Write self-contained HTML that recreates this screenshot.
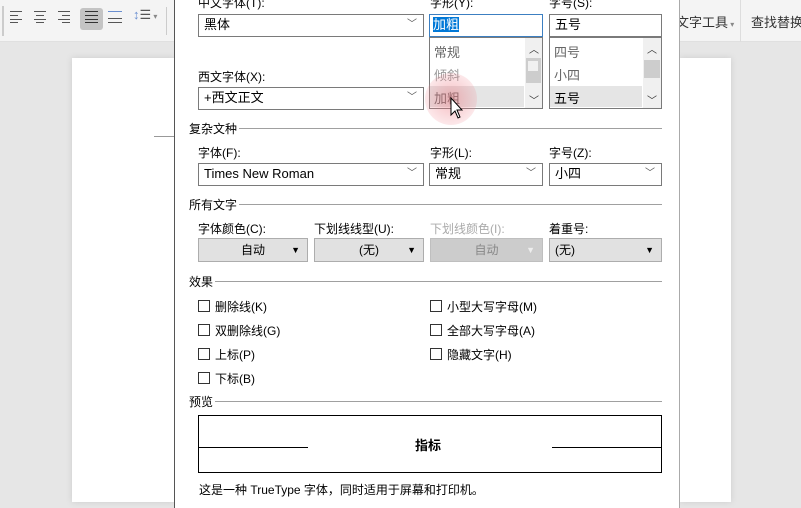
<!DOCTYPE html>
<html><head><meta charset="utf-8"><style>
*{box-sizing:border-box;margin:0;padding:0}
body{width:801px;height:502px;overflow:hidden;position:relative;background:#e6e6e6;font-family:"Liberation Sans","Noto Sans CJK SC",sans-serif;font-size:12px;color:#000}
.a{position:absolute;white-space:nowrap}
.tb{left:0;top:0;width:801px;height:42px;background:#f4f4f4;border-bottom:1px solid #e0e0e0}
.dlg{left:174px;top:-2px;width:506px;height:510px;background:#fff;border-left:1px solid #555;border-right:1px solid #aaa}
.combo{position:absolute;height:23px;border:1px solid #7a7a7a;background:#fff;padding:0 5px;line-height:20px;font-size:13px;white-space:nowrap}
.combo .ch{position:absolute;right:6px;top:0;color:#555;font-size:10px}
.sec{position:absolute;left:189px;font-size:12px;background:#fff;padding-right:2px}
.line{position:absolute;height:1px;background:#a0a0a0}
.lbl{position:absolute;font-size:12px;white-space:nowrap}
.btn{position:absolute;height:24px;background:#e1e1e1;border:1px solid #adadad;font-size:12px;text-align:center;line-height:22px}
.btn .t{position:absolute;right:7px;top:0;font-size:9px}
.cb{position:absolute;width:12px;height:12px;border:1px solid #333;background:#fff}
.ct{position:absolute;font-size:12px;white-space:nowrap}
.lst{position:absolute;border:1px solid #7a7a7a;background:#fff}
.it{position:absolute;left:4px;font-size:13px;color:#666}
.ic{position:absolute;top:11px;width:14px;height:12px}
.ic i{position:absolute;left:0;height:1px;background:#555}
</style></head><body>
<div class="a tb"></div>
<div class="a" style="left:2px;top:6px;width:2px;height:30px;background:#ccc"></div>
<div class="a" style="left:80px;top:8px;width:23px;height:22px;background:#c4c4c4;border-radius:3px"></div>
<div class="ic" style="left:10px"><i style="top:0;width:12px"></i><i style="top:4px;width:8px"></i><i style="top:8px;width:12px"></i><i style="top:11px;width:8px"></i></div>
<div class="ic" style="left:34px"><i style="top:0;width:12px"></i><i style="top:4px;width:8px;left:2px"></i><i style="top:8px;width:12px"></i><i style="top:11px;width:8px;left:2px"></i></div>
<div class="ic" style="left:58px"><i style="top:0;width:12px"></i><i style="top:4px;width:8px;left:4px"></i><i style="top:8px;width:12px"></i><i style="top:11px;width:8px;left:4px"></i></div>
<div class="ic" style="left:85px"><i style="top:0;width:13px;background:#333"></i><i style="top:4px;width:13px;background:#333"></i><i style="top:8px;width:13px;background:#333"></i><i style="top:11px;width:13px;background:#333"></i></div>
<div class="ic" style="left:108px"><i style="top:0;width:14px;background:#6a8fd0"></i><i style="top:7px;width:14px"></i><i style="top:11px;width:14px"></i></div>
<div class="a" style="left:133px;top:7px;font-size:13px;color:#6a8fd0">↕<span style="color:#555">☰</span><span style="font-size:8px;color:#888"> ▾</span></div>
<div class="a" style="left:166px;top:7px;width:1px;height:28px;background:#ccc"></div>
<div class="a" style="left:740px;top:0;width:1px;height:42px;background:#ddd"></div>
<div class="a" style="left:676px;top:12px;font-size:13px;color:#333">文字工具<span style="font-size:8px;color:#888"> ▾</span></div>
<div class="a" style="left:751px;top:12px;font-size:13px;color:#333">查找替换</div>
<div class="a" style="left:72px;top:58px;width:103px;height:444px;background:#fff;box-shadow:0 0 6px #ccc"></div>
<div class="a" style="left:154px;top:136px;width:20px;height:1px;background:#999"></div>
<div class="a" style="left:680px;top:58px;width:51px;height:444px;background:#fff;box-shadow:0 0 6px #ccc"></div>
<div class="a dlg"></div>

<div class="lbl" style="left:198px;top:-6px">中文字体(T):</div>
<div class="lbl" style="left:430px;top:-6px">字形(Y):</div>
<div class="lbl" style="left:549px;top:-6px">字号(S):</div>
<div class="combo" style="left:198px;top:14px;width:226px">黑体<span class="ch">﹀</span></div>
<div class="combo" style="left:429px;top:14px;width:114px;border-color:#3c7fc1;padding:0 3px"><span style="background:#0078d7;color:#fff">加粗</span></div>
<div class="combo" style="left:549px;top:14px;width:113px">五号</div>
<div class="lst" style="left:429px;top:37px;width:114px;height:72px">
<div class="a" style="left:0;top:48px;width:94px;height:21px;background:#e5e5e5"></div>
<div class="it" style="top:4px">常规</div><div class="it" style="top:27px;color:#999">倾斜</div><div class="it" style="top:50px">加粗</div>
<div class="a" style="left:95px;top:0;width:17px;height:70px;background:#f0f0f0"></div>
<div class="a" style="left:96px;top:20px;width:15px;height:25px;background:#cdcdcd"></div>
<div class="a" style="left:98px;top:23px;width:10px;height:10px;background:#f0f0f0"></div>
<div class="a" style="left:99px;top:3px;font-size:10px;color:#333">︿</div>
<div class="a" style="left:99px;top:54px;font-size:10px;color:#333">﹀</div>
</div>
<div class="lst" style="left:549px;top:37px;width:113px;height:72px">
<div class="a" style="left:0;top:48px;width:92px;height:21px;background:#e5e5e5"></div>
<div class="it" style="top:4px">四号</div><div class="it" style="top:27px">小四</div><div class="it" style="top:50px;color:#000">五号</div>
<div class="a" style="left:93px;top:0;width:18px;height:70px;background:#f0f0f0"></div>
<div class="a" style="left:94px;top:22px;width:16px;height:18px;background:#cdcdcd"></div>
<div class="a" style="left:97px;top:3px;font-size:10px;color:#333">︿</div>
<div class="a" style="left:97px;top:54px;font-size:10px;color:#333">﹀</div>
</div>
<div class="a" style="left:425px;top:73px;width:52px;height:52px;border-radius:50%;background:radial-gradient(circle,rgba(235,110,120,.45),rgba(240,140,150,.2) 70%,rgba(255,255,255,0))"></div>
<svg class="a" style="left:450px;top:97px" width="16" height="24" viewBox="0 0 16 24"><path d="M1 1 L1 18 L5 14 L8 21 L10 20 L7 13 L12 13 Z" fill="#fff" stroke="#000" stroke-width="1"/></svg>

<div class="lbl" style="left:198px;top:68px">西文字体(X):</div>
<div class="combo" style="left:198px;top:87px;width:226px">+西文正文<span class="ch">﹀</span></div>

<div class="line" style="left:189px;top:128px;width:473px"></div><div class="sec" style="top:120px">复杂文种</div>
<div class="lbl" style="left:198px;top:144px">字体(F):</div>
<div class="lbl" style="left:430px;top:144px">字形(L):</div>
<div class="lbl" style="left:549px;top:144px">字号(Z):</div>
<div class="combo" style="left:198px;top:163px;width:226px">Times New Roman<span class="ch">﹀</span></div>
<div class="combo" style="left:429px;top:163px;width:114px">常规<span class="ch">﹀</span></div>
<div class="combo" style="left:549px;top:163px;width:113px">小四<span class="ch">﹀</span></div>

<div class="line" style="left:189px;top:204px;width:473px"></div><div class="sec" style="top:196px">所有文字</div>
<div class="lbl" style="left:198px;top:220px">字体颜色(C):</div>
<div class="lbl" style="left:314px;top:220px">下划线线型(U):</div>
<div class="lbl" style="left:430px;top:220px;color:#aaa">下划线颜色(I):</div>
<div class="lbl" style="left:549px;top:220px">着重号:</div>
<div class="btn" style="left:198px;top:238px;width:110px">自动<span class="t">▼</span></div>
<div class="btn" style="left:314px;top:238px;width:110px">(无)<span class="t">▼</span></div>
<div class="btn" style="left:430px;top:238px;width:113px;background:#ccc;border-color:#bfbfbf;color:#888">自动<span class="t" style="color:#eee">▼</span></div>
<div class="btn" style="left:549px;top:238px;width:113px;text-align:left;padding-left:5px">(无)<span class="t">▼</span></div>

<div class="line" style="left:189px;top:281px;width:473px"></div><div class="sec" style="top:273px">效果</div>
<div class="cb" style="left:198px;top:300px"></div><div class="ct" style="left:215px;top:298px">删除线(K)</div>
<div class="cb" style="left:198px;top:324px"></div><div class="ct" style="left:215px;top:322px">双删除线(G)</div>
<div class="cb" style="left:198px;top:348px"></div><div class="ct" style="left:215px;top:346px">上标(P)</div>
<div class="cb" style="left:198px;top:372px"></div><div class="ct" style="left:215px;top:370px">下标(B)</div>
<div class="cb" style="left:430px;top:300px"></div><div class="ct" style="left:447px;top:298px">小型大写字母(M)</div>
<div class="cb" style="left:430px;top:324px"></div><div class="ct" style="left:447px;top:322px">全部大写字母(A)</div>
<div class="cb" style="left:430px;top:348px"></div><div class="ct" style="left:447px;top:346px">隐藏文字(H)</div>

<div class="line" style="left:189px;top:401px;width:473px"></div><div class="sec" style="top:393px">预览</div>
<div class="a" style="left:198px;top:415px;width:464px;height:58px;border:1px solid #000"></div>
<div class="a" style="left:198px;top:447px;width:110px;height:1px;background:#000"></div>
<div class="a" style="left:552px;top:447px;width:110px;height:1px;background:#000"></div>
<div class="a" style="left:415px;top:435px;font-weight:bold;font-size:13px">指标</div>
<div class="a" style="left:199px;top:481px;font-size:12px">这是一种 TrueType 字体，同时适用于屏幕和打印机。</div>
</body></html>
